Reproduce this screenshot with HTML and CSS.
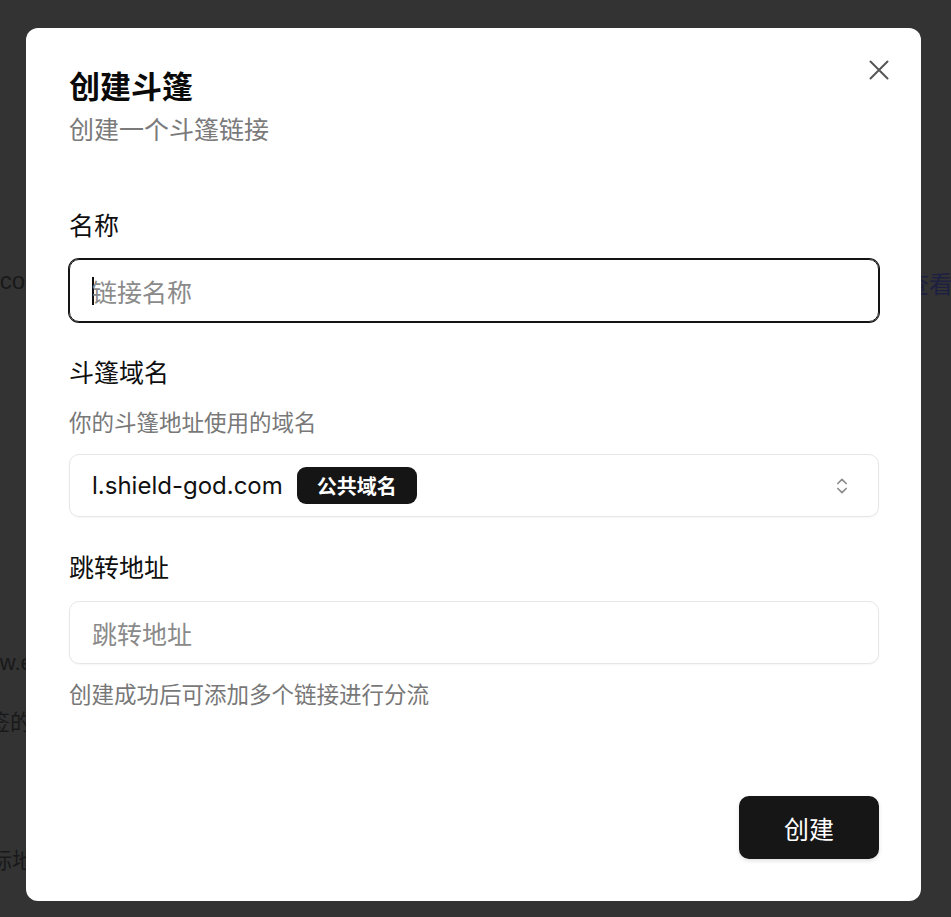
FILE: index.html
```html
<!DOCTYPE html>
<html lang="zh-CN">
<head>
<meta charset="utf-8">
<title>创建斗篷</title>
<link rel="stylesheet" href="styles.css">
</head>
<body>
<div class="backdrop">
  <div class="bg-row row-1"><span class="bg-left bg-cord">discord</span><span class="bg-link">查看</span></div>
  <div class="bg-row row-2"><span class="bg-left bg-www">www.example.com</span></div>
  <div class="bg-row row-3"><span class="bg-left bg-tag">标签的</span></div>
  <div class="bg-row row-4"><span class="bg-left bg-target">目标地址</span></div>
</div>

<div class="modal" role="dialog">
  <button class="close" aria-label="关闭">
    <svg viewBox="0 0 24 24" width="24" height="24" fill="none" stroke="currentColor" stroke-width="2" stroke-linecap="round"><path d="M3.5 3.5 20.5 20.5M20.5 3.5 3.5 20.5"/></svg>
  </button>
  <h1 class="title">创建斗篷</h1>
  <p class="subtitle">创建一个斗篷链接</p>

  <div class="field first">
    <label class="label">名称</label>
    <div class="control focused"><span class="caret"></span><span class="placeholder">链接名称</span></div>
  </div>

  <div class="field">
    <label class="label">斗篷域名</label>
    <p class="desc">你的斗篷地址使用的域名</p>
    <div class="control select">
      <span class="domain">l.shield-god.com</span>
      <span class="badge">公共域名</span>
      <svg class="chev" viewBox="0 0 24 24" width="20" height="20" fill="none" stroke="currentColor" stroke-width="2" stroke-linecap="round" stroke-linejoin="round"><path d="m7 15 5 5 5-5"/><path d="m7 9 5-5 5 5"/></svg>
    </div>
  </div>

  <div class="field">
    <label class="label">跳转地址</label>
    <div class="control"><span class="placeholder">跳转地址</span></div>
    <p class="help">创建成功后可添加多个链接进行分流</p>
  </div>

  <div class="footer">
    <button class="primary">创建</button>
  </div>
</div>
</body>
</html>
```

FILE: styles.css
```css
* { box-sizing: border-box; }
html, body { margin: 0; padding: 0; }
body {
  width: 951px;
  height: 917px;
  overflow: hidden;
  background: #333333;
  font-family: Inter, "Noto Sans CJK SC", sans-serif;
}

/* dimmed page behind the dialog */
.backdrop {
  display: flex;
  flex-direction: column;
  padding-top: 266px;
  color: #191919;
  font-family: "Liberation Sans", "Noto Sans CJK SC", sans-serif;
  font-size: 24px;
  line-height: 30px;
}
.bg-row {
  display: flex;
  justify-content: space-between;
  white-space: nowrap;
}
.row-2 { margin-top: 348px; }
.row-3 { margin-top: 30px; }
.row-4 { margin-top: 108px; }
.bg-cord { margin-left: -31px; }
.bg-www { margin-left: -32px; font-size: 22px; }
.bg-tag { margin-left: -34px; font-size: 22px; }
.bg-target { margin-left: -32px; font-size: 22px; }
.bg-link { color: #1d2040; margin-right: -2px; }
.row-1 .bg-link { padding-top: 4px; }

/* dialog */
.modal {
  position: fixed;
  left: 26px;
  top: 28px;
  width: 895px;
  height: 873px;
  background: #ffffff;
  border-radius: 12px;
  padding: 41px 42px 42px 43px;
  display: flex;
  flex-direction: column;
}
.close {
  position: absolute;
  top: 30px;
  right: 30px;
  width: 24px;
  height: 24px;
  padding: 0;
  border: 0;
  background: none;
  color: #555555;
  display: flex;
}
.title {
  margin: 0;
  font-size: 31px;
  line-height: 36px;
  font-weight: 700;
  color: #0a0a0a;
}
.subtitle {
  margin: 8px 0 0;
  font-size: 25px;
  line-height: 34px;
  color: #7a7a7a;
}
.field {
  display: flex;
  flex-direction: column;
  margin-top: 34px;
}
.field.first { margin-top: 62px; }
.label {
  font-size: 25px;
  line-height: 34px;
  color: #0f0f0f;
}
.desc {
  margin: 18px 0 0;
  font-size: 22.5px;
  line-height: 30px;
  color: #787878;
}
.help {
  margin: 16px 0 0;
  font-size: 22.5px;
  line-height: 30px;
  color: #787878;
}
.control {
  margin-top: 16px;
  height: 63px;
  border: 1px solid #e6e6e6;
  border-radius: 10px;
  padding: 0 22px;
  display: flex;
  align-items: center;
  box-shadow: 0 1px 2px rgba(0, 0, 0, 0.04);
  font-size: 25px;
}
.control.focused {
  border-color: #141414;
  box-shadow: 0 0 0 1px #141414;
}
.caret {
  width: 2px;
  height: 28px;
  background: #111111;
  margin-right: -2px;
}
.placeholder { color: #8a8a8a; }
.select .domain {
  color: #111111;
  font-size: 24px;
}
.badge {
  margin-left: 14px;
  height: 37px;
  padding: 0 20px;
  border-radius: 9px;
  background: #151515;
  color: #ffffff;
  font-size: 20px;
  font-weight: 700;
  display: flex;
  align-items: center;
}
.chev {
  margin-left: auto;
  margin-right: 4px;
  color: #8c8c8c;
}
.footer {
  margin-top: auto;
  display: flex;
  justify-content: flex-end;
}
.primary {
  width: 140px;
  height: 63px;
  border: 0;
  border-radius: 10px;
  background: #161616;
  color: #ffffff;
  font-family: Inter, "Noto Sans CJK SC", sans-serif;
  font-size: 25px;
  box-shadow: 0 2px 4px rgba(0, 0, 0, 0.12);
}
```
